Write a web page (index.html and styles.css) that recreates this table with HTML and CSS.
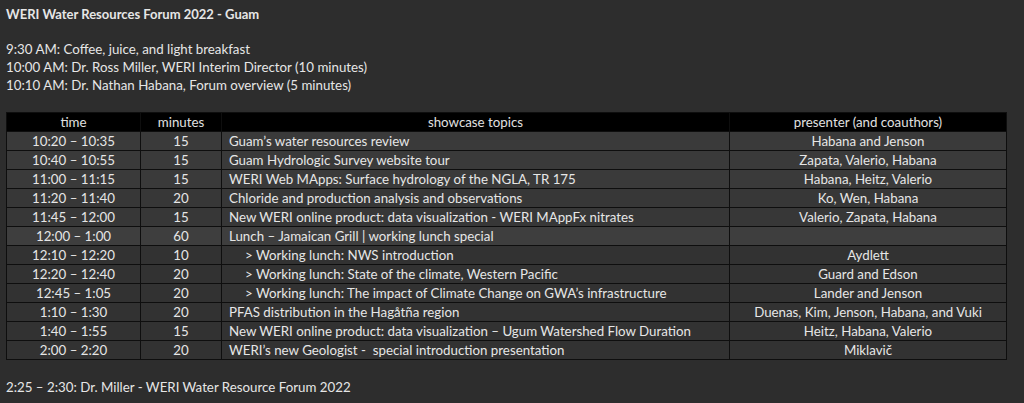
FILE: index.html
```html
<!DOCTYPE html>
<html>
<head>
<meta charset="utf-8">
<link rel="stylesheet" href="styles.css">
</head>
<body>
<div class="page">
  <p class="title">WERI Water Resources Forum 2022 - Guam</p>
  <div class="intro">
    <p>9:30 AM: Coffee, juice, and light breakfast</p>
    <p>10:00 AM: Dr. Ross Miller, WERI Interim Director (10 minutes)</p>
    <p>10:10 AM: Dr. Nathan Habana, Forum overview (5 minutes)</p>
  </div>
  <table class="sched">
    <colgroup>
      <col class="c-time"><col class="c-min"><col class="c-topic"><col class="c-pres">
    </colgroup>
    <thead>
      <tr><th>time</th><th>minutes</th><th>showcase topics</th><th>presenter (and coauthors)</th></tr>
    </thead>
    <tbody>
      <tr class="lt"><td>10:20 – 10:35</td><td>15</td><td class="topic">Guam’s water resources review</td><td>Habana and Jenson</td></tr>
      <tr class="lt"><td>10:40 – 10:55</td><td>15</td><td class="topic">Guam Hydrologic Survey website tour</td><td>Zapata, Valerio, Habana</td></tr>
      <tr class="lt"><td>11:00 – 11:15</td><td>15</td><td class="topic">WERI Web MApps: Surface hydrology of the NGLA, TR 175</td><td>Habana, Heitz, Valerio</td></tr>
      <tr><td>11:20 – 11:40</td><td>20</td><td class="topic">Chloride and production analysis and observations</td><td>Ko, Wen, Habana</td></tr>
      <tr><td>11:45 – 12:00</td><td>15</td><td class="topic">New WERI online product: data visualization - WERI MAppFx nitrates</td><td>Valerio, Zapata, Habana</td></tr>
      <tr class="lunch"><td>12:00 – 1:00</td><td>60</td><td class="topic">Lunch – Jamaican Grill | working lunch special</td><td></td></tr>
      <tr class="dk"><td>12:10 – 12:20</td><td>10</td><td class="topic sub">&gt; Working lunch: NWS introduction</td><td>Aydlett</td></tr>
      <tr class="dk"><td>12:20 – 12:40</td><td>20</td><td class="topic sub">&gt; Working lunch: State of the climate, Western Pacific</td><td>Guard and Edson</td></tr>
      <tr class="dk"><td>12:45 – 1:05</td><td>20</td><td class="topic sub">&gt; Working lunch: The impact of Climate Change on GWA’s infrastructure</td><td>Lander and Jenson</td></tr>
      <tr class="dk"><td>1:10 – 1:30</td><td>20</td><td class="topic">PFAS distribution in the Hagåtña region</td><td>Duenas, Kim, Jenson, Habana, and Vuki</td></tr>
      <tr class="dk"><td>1:40 – 1:55</td><td>15</td><td class="topic">New WERI online product: data visualization – Ugum Watershed Flow Duration</td><td>Heitz, Habana, Valerio</td></tr>
      <tr class="dk"><td>2:00 – 2:20</td><td>20</td><td class="topic">WERI’s new Geologist - &nbsp;special introduction presentation</td><td>Miklavič</td></tr>
    </tbody>
  </table>
  <p class="closing">2:25 – 2:30: Dr. Miller - WERI Water Resource Forum 2022</p>
</div>
</body>
</html>
```

FILE: styles.css
```css
html, body {
  margin: 0;
  padding: 0;
  background: #2d2d2d;
}
body {
  color: #e6e6e6;
  font-family: Lato, "Open Sans", sans-serif;
  font-size: 13.3px;
  line-height: 18px;
}
.page {
  padding: 5px 6px 0 6px;
}
p {
  margin: 0;
}
.title {
  font-weight: bold;
  font-size: 13px;
  margin-bottom: 17px;
}
.intro {
  margin-bottom: 18px;
}
.sched {
  border-collapse: collapse;
  width: 1000px;
  table-layout: fixed;
}
.c-time { width: 134px; }
.c-min { width: 81px; }
.c-topic { width: 508px; }
.c-pres { width: 277px; }
.sched th, .sched td {
  border: 1px solid #0e0e0e;
  height: 18px;
  padding: 0;
  text-align: center;
  font-weight: normal;
  line-height: 18px;
  white-space: nowrap;
  overflow: hidden;
}
.sched th {
  background: #000;
  color: #e0e0e0;
}
.sched td {
  background: #373737;
}
.sched tr.lt td { background: #3a3a3a; }
.sched tr.lunch td { background: #3e3e3e; }
.sched tr.dk td { background: #323232; }
.sched td.topic {
  text-align: left;
  padding-left: 7px;
}
.sched td.sub {
  padding-left: 23px;
}
.closing {
  margin-top: 18px;
}
```
